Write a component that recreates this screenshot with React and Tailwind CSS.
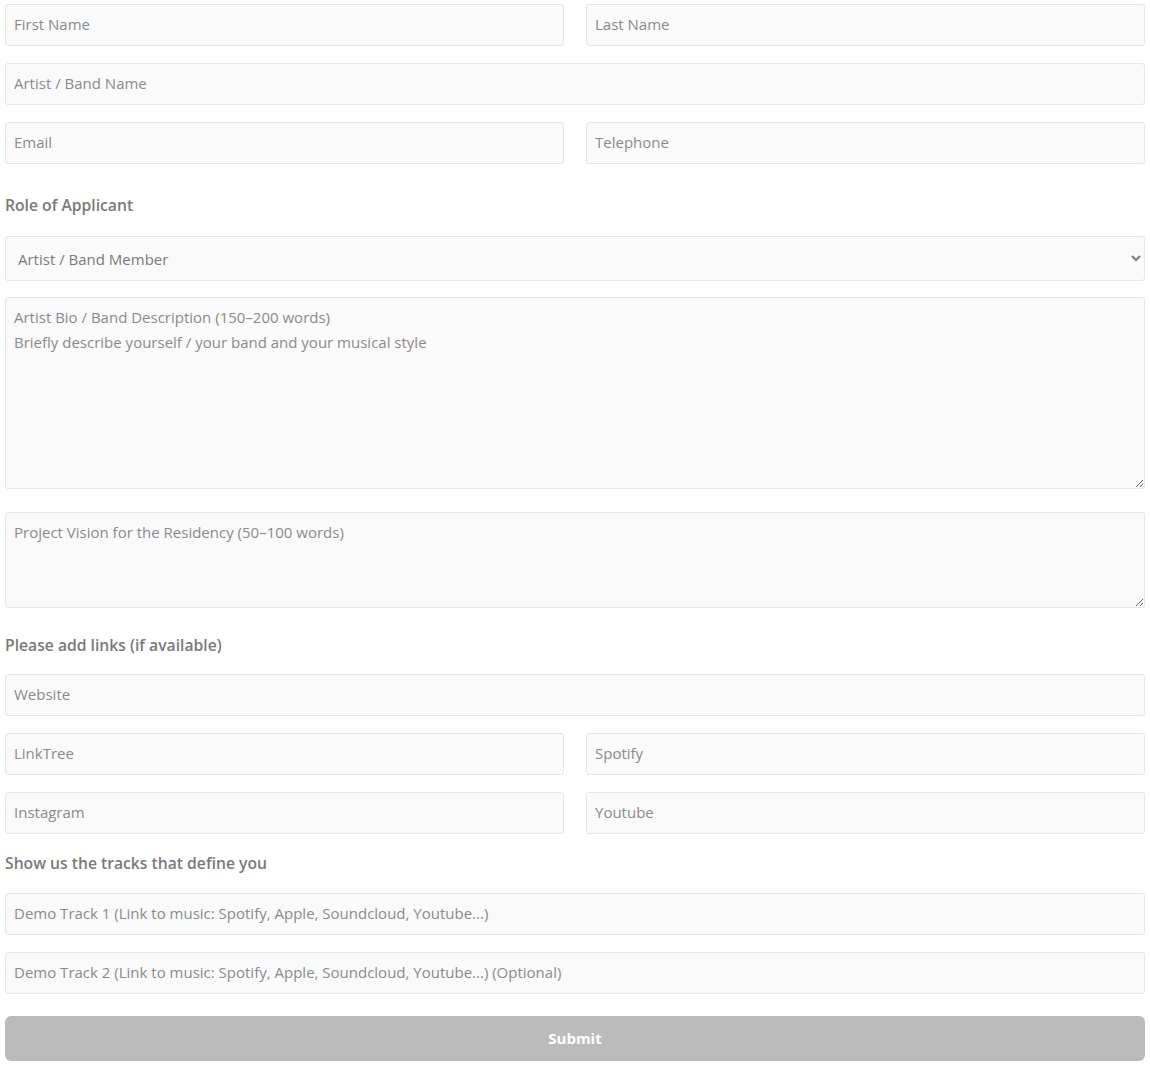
import React from 'react';

const inputCls =
  "w-full h-[42px] rounded-[3px] border border-[#e6e6e6] bg-[#fafafa] px-[8px] pb-[2px] text-[15px] text-[#777] placeholder:text-[#8a8a8a] outline-none";

const Field = ({ placeholder, className = '' }) => (
  <input type="text" placeholder={placeholder} className={`${inputCls} ${className}`} />
);

const Label = ({ children, className = '' }) => (
  <div className={`h-[20px] leading-[20px] text-[15.7px] font-semibold text-[#7a7a7a] ${className}`}>{children}</div>
);

export default function App() {
  return (
    <div className="w-[1150px] bg-white px-[5px] pt-[4px] pb-[4px]" style={{ fontFamily: '"Open Sans", Lato, sans-serif' }}>
      <form className="flex flex-col" onSubmit={(e) => e.preventDefault()}>
        <div className="grid grid-cols-2 gap-x-[22px]">
          <Field placeholder="First Name" />
          <Field placeholder="Last Name" />
        </div>
        <Field placeholder="Artist / Band Name" className="mt-[17px]" />
        <div className="grid grid-cols-2 gap-x-[22px] mt-[17px]">
          <Field placeholder="Email" />
          <Field placeholder="Telephone" />
        </div>

        <Label className="mt-[31px]">Role of Applicant</Label>
        <select
          defaultValue="artist"
          className="mt-[21px] w-full h-[45px] rounded-[3px] border border-[#e6e6e6] bg-[#fafafa] px-[8px] text-[15px] text-[#7a7a7a] outline-none"
        >
          <option value="artist">Artist / Band Member</option>
          <option value="manager">Manager</option>
          <option value="other">Other</option>
        </select>

        <textarea
          placeholder={"Artist Bio / Band Description (150–200 words)\nBriefly describe yourself / your band and your musical style"}
          className="mt-[16px] w-full h-[192px] rounded-[3px] border border-[#e6e6e6] bg-[#fafafa] px-[8px] py-[7px] text-[15px] leading-[25px] text-[#777] placeholder:text-[#8a8a8a] outline-none"
        />
        <textarea
          placeholder="Project Vision for the Residency (50–100 words)"
          className="mt-[23px] w-full h-[96px] rounded-[3px] border border-[#e6e6e6] bg-[#fafafa] px-[8px] py-[7px] text-[15px] leading-[25px] text-[#777] placeholder:text-[#8a8a8a] outline-none"
        />

        <Label className="mt-[27px]">Please add links (if available)</Label>
        <Field placeholder="Website" className="mt-[19px]" />
        <div className="grid grid-cols-2 gap-x-[22px] mt-[17px]">
          <Field placeholder="LinkTree" />
          <Field placeholder="Spotify" />
        </div>
        <div className="grid grid-cols-2 gap-x-[22px] mt-[17px]">
          <Field placeholder="Instagram" />
          <Field placeholder="Youtube" />
        </div>

        <Label className="mt-[19px]">Show us the tracks that define you</Label>
        <Field placeholder="Demo Track 1 (Link to music: Spotify, Apple, Soundcloud, Youtube...)" className="mt-[20px]" />
        <Field placeholder="Demo Track 2 (Link to music: Spotify, Apple, Soundcloud, Youtube...) (Optional)" className="mt-[17px]" />

        <button
          type="submit"
          className="mt-[22px] w-full h-[45px] rounded-[6px] bg-[#bbbbbb] text-white text-[15px] font-bold"
        >
          Submit
        </button>
      </form>
    </div>
  );
}
